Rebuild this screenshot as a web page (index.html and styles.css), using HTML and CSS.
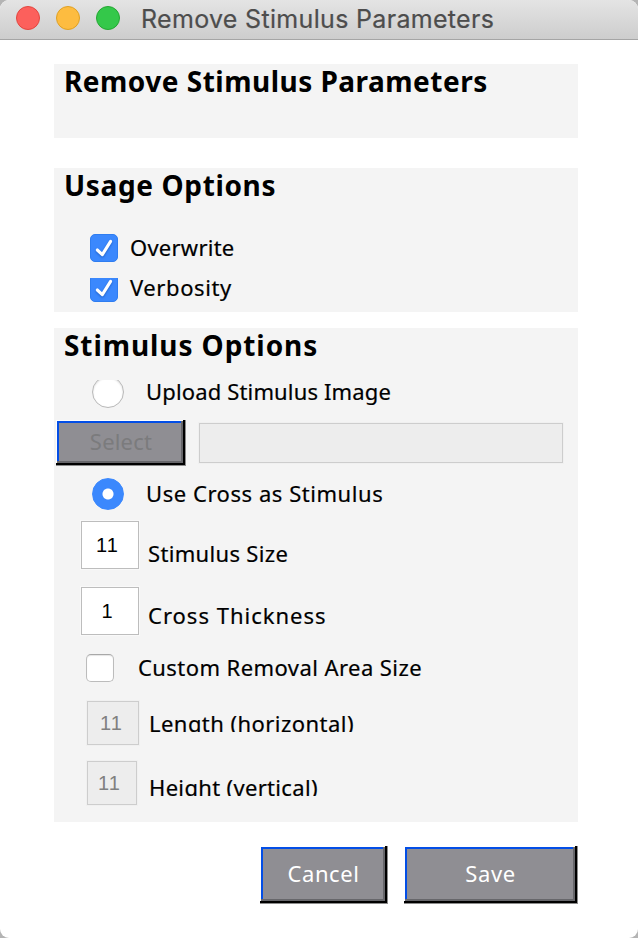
FILE: index.html
```html
<!DOCTYPE html>
<html lang="en">
<head>
<meta charset="utf-8">
<title>Remove Stimulus Parameters</title>
<link rel="stylesheet" href="styles.css">
</head>
<body>
<div class="window">
  <header class="titlebar">
    <span class="light red"></span>
    <span class="light yellow"></span>
    <span class="light green"></span>
    <span class="window-title">Remove Stimulus Parameters</span>
  </header>
  <main class="content">
    <section class="panel panel-intro">
      <h1 class="heading h-intro">Remove Stimulus Parameters</h1>
    </section>
    <section class="panel panel-usage">
      <h2 class="heading h-usage">Usage Options</h2>
      <div class="row row-overwrite">
        <span class="check checked"><svg viewBox="0 0 28 28"><path d="M7.3 16 L12.3 20.6 L20.6 7.4"/></svg></span>
        <span class="label l-overwrite">Overwrite</span>
      </div>
      <div class="row row-verbosity">
        <span class="check checked"><svg viewBox="0 0 28 28"><path d="M7.3 16 L12.3 20.6 L20.6 7.4"/></svg></span>
        <span class="label l-verbosity">Verbosity</span>
      </div>
    </section>
    <section class="panel panel-stimulus">
      <h2 class="heading h-stimulus">Stimulus Options</h2>
      <div class="row row-upload">
        <span class="radio"></span>
        <span class="label l-upload">Upload Stimulus Image</span>
      </div>
      <div class="row row-select">
        <button class="button select" disabled>Select</button>
        <span class="field path disabled"></span>
      </div>
      <div class="row row-cross">
        <span class="radio on"></span>
        <span class="label l-cross">Use Cross as Stimulus</span>
      </div>
      <div class="row row-size">
        <span class="field number">11</span>
        <span class="label l-size">Stimulus Size</span>
      </div>
      <div class="row row-thick">
        <span class="field number">1</span>
        <span class="label l-thick">Cross Thickness</span>
      </div>
      <div class="row row-custom">
        <span class="check"></span>
        <span class="label l-custom">Custom Removal Area Size</span>
      </div>
      <div class="row row-length">
        <span class="field small disabled">11</span>
        <span class="label clipped l-length">Length (horizontal)</span>
      </div>
      <div class="row row-height">
        <span class="field small narrow disabled">11</span>
        <span class="label clipped l-height">Height (vertical)</span>
      </div>
    </section>
    <footer class="actions">
      <button class="button cancel">Cancel</button>
      <button class="button save">Save</button>
    </footer>
  </main>
</div>
</body>
</html>
```
FILE: styles.css
```css
* { box-sizing: border-box; }
body { margin: 0; background: #b4b4b4; }
.window {
  width: 638px; height: 938px; overflow: hidden;
  background: #fff; border-radius: 9px;
  font-family: "Noto Sans", "Open Sans", sans-serif; color: #000;
}
.titlebar {
  display: flex; align-items: flex-start; height: 40px;
  padding: 6px 0 0 16px; gap: 16px;
  background: linear-gradient(#e4e4e4, #cdcdcd);
  border-bottom: 1px solid #a5a5a5;
}
.light { width: 24px; height: 24px; border-radius: 50%; border: 1px solid; flex: none; }
.red { background: #fc605c; border-color: #e2463f; }
.yellow { background: #fdbc40; border-color: #dfa023; }
.green { background: #34c84a; border-color: #24a732; }
.window-title {
  margin: -3px 0 0 5px; font: 25px/32px Inter, sans-serif;
  color: #4d4d4d; white-space: nowrap; letter-spacing: .32px;
  -webkit-text-stroke: .2px #4d4d4d;
}
.content { padding: 24px 60px 0 54px; }
.panel { background: #f4f4f4; }
.panel-intro { height: 74px; margin-bottom: 30px; }
.panel-usage { height: 144px; margin-bottom: 16px; }
.panel-stimulus { height: 494px; }
.heading {
  margin: 0; padding-left: 10px; height: 36px;
  font-size: 28px; line-height: 34px; font-weight: 700; white-space: nowrap;
}
.h-intro { letter-spacing: .49px; }
.h-usage { letter-spacing: .64px; }
.h-stimulus { letter-spacing: .92px; }
.row { display: flex; align-items: flex-start; }
.label { font-size: 22px; line-height: 30px; height: 32px; white-space: nowrap; -webkit-text-stroke: .2px #000; }
.l-overwrite { letter-spacing: .25px; }
.l-verbosity { letter-spacing: .6px; }
.l-upload { letter-spacing: .15px; }
.l-cross { letter-spacing: .55px; }
.l-size { letter-spacing: .33px; }
.l-thick { letter-spacing: 1px; }
.l-custom { letter-spacing: .43px; }
.l-length { letter-spacing: .45px; }
.l-height { letter-spacing: .33px; }

.check {
  flex: none; width: 28px; height: 28px; border-radius: 5px;
  background: #fff; border: 1px solid #bcbcbc; border-top-color: #a8a8a8;
  box-shadow: inset 0 1px 1px #e5e5e5;
}
.checked { background: #3b88fd; border-color: #2f7df0; box-shadow: none; }
.check svg { display: block; width: 28px; height: 28px; margin: -1px; }
.check path {
  fill: none; stroke: #fff; stroke-width: 3.1; stroke-linecap: round; stroke-linejoin: round;
  filter: drop-shadow(0 1px 1px #1c5fc8);
}
.radio {
  flex: none; width: 32px; height: 32px; border-radius: 50%;
  background: #fff; border: 1px solid #b8b8b8; box-shadow: inset 0 1px 2px #ddd;
}
.radio.on { background: radial-gradient(circle, #fff 5px, #3b88fd 6px); border-color: #3b88fd; box-shadow: none; }

.field {
  flex: none; background: #fff; border: 1px solid #bdbdbd;
  box-shadow: 0 0 0 1px #f9f9f9; letter-spacing: 1px;
  font-family: "Liberation Sans", Arial, sans-serif; font-size: 20px;
}
.field.disabled { background: #ededed; border-color: #cdcdcd; color: #808080; box-shadow: 0 0 0 1px #f0f0f0; }
.number { width: 58px; height: 48px; line-height: 47px; padding-right: 5px; text-align: center; }
.small { width: 52px; height: 44px; line-height: 42px; padding-right: 3px; text-align: center; }
.narrow { width: 50px; padding-right: 5px; }
.path { width: 364px; height: 40px; margin: 3px 0 0 13px; }

.row-overwrite { margin-top: 30px; padding-left: 36px; height: 28px; }
.row-overwrite .label { margin: -2px 0 0 12px; }
.row-verbosity { margin-top: 16px; padding-left: 36px; height: 24px; }
.row-verbosity .check { margin-top: -4px; clip-path: inset(4px 0 0 0); }
.row-verbosity .label { margin: -6px 0 0 12px; }
.row-upload { margin-top: 16px; padding-left: 38px; height: 28px; }
.row-upload .radio { margin-top: -4px; clip-path: inset(4px 0 0 0); }
.row-upload .label { margin: -4px 0 0 22px; }
.row-select { margin-top: 12px; padding-left: 2px; height: 46px; }
.row-cross { margin-top: 12px; padding-left: 38px; height: 32px; }
.row-cross .label { margin-left: 22px; }
.row-size { margin-top: 11px; padding-left: 27px; height: 48px; }
.row-size .label { margin: 17px 0 0 9px; }
.row-thick { margin-top: 18px; padding-left: 27px; height: 48px; }
.row-thick .label { margin: 13px 0 0 9px; }
.row-custom { margin-top: 19px; padding-left: 32px; height: 28px; }
.row-custom .label { margin: -2px 0 0 24px; }
.row-length, .row-height { padding-left: 33px; height: 44px; }
.row-length { margin-top: 19px; }
.row-height { margin-top: 16px; }
.row-length .label { margin: 7px 0 0 10px; }
.row-height .label { margin: 11px 0 0 12px; }
.row .clipped { overflow: hidden; height: 24px; }

.actions { display: flex; justify-content: flex-end; gap: 16px; padding-top: 24px; }
.button {
  flex: none; border: 0; padding: 0 1px 4px 0;
  font: 22px/30px "Noto Sans", sans-serif; color: #fff; letter-spacing: .6px;
  background:
    linear-gradient(#000, #000) calc(100% - 1px) 0 / 2px calc(100% - 1px),
    linear-gradient(#000, #000) 0 calc(100% - 1px) / calc(100% - 1px) 2px,
    linear-gradient(#8c8c8c, #8c8c8c) 100% 0 / 1px 100%,
    linear-gradient(#8c8c8c, #8c8c8c) 0 100% / 100% 1px,
    linear-gradient(#67676b, #67676b) calc(100% - 3px) 1px / 2px calc(100% - 4px),
    linear-gradient(#67676b, #67676b) 1px calc(100% - 3px) / calc(100% - 4px) 2px,
    linear-gradient(#fff, #fff) 0 0 / 1px 100%,
    linear-gradient(#fff, #fff) 0 0 / 100% 1px,
    linear-gradient(#034ee6, #034ee6) 0 1px / 100% 2px,
    linear-gradient(#034ee6, #034ee6) 1px 0 / 2px 100%,
    #8f8e93;
  background-repeat: no-repeat;
}
.select { width: 130px; height: 46px; color: #7b7b7d; letter-spacing: .2px; padding-right: 0; }
.cancel { width: 128px; height: 58px; }
.save { width: 174px; height: 58px; }
```
